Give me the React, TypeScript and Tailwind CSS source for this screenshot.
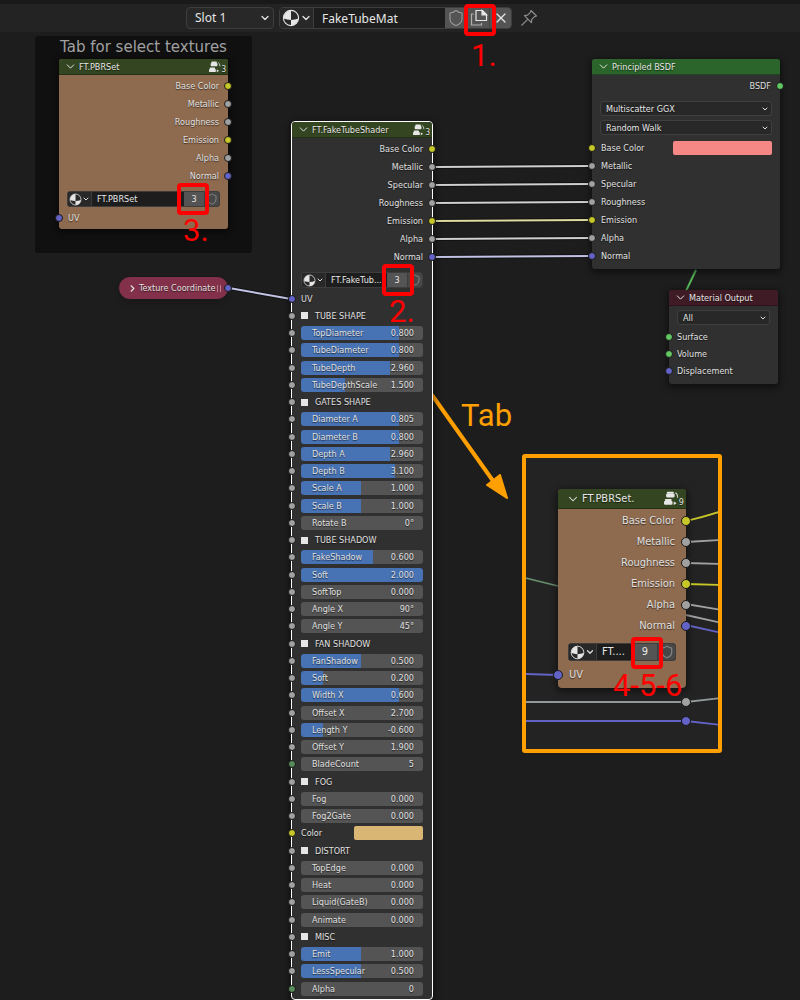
import React, { useId, useState } from "react";
import { ChevronDown, ChevronRight, Shield, X } from "lucide-react";

const small = "font-['DejaVu_Sans_Condensed','DejaVu_Sans',sans-serif] text-[9px] leading-[12px]";
const shadow = "[text-shadow:0_1px_1px_rgba(0,0,0,0.6)]";

type Kind = "color" | "value" | "vector" | "shader" | "int";

const socketColor: Record<Kind, string> = {
  color: "bg-[#c7c729]",
  value: "bg-[#a1a1a1]",
  vector: "bg-[#6363c7]",
  shader: "bg-[#63c763]",
  int: "bg-[#598c5c]",
};

function Socket({ kind, side, large }: { kind: Kind; side: "left" | "right"; large?: boolean }) {
  const size = large ? "size-2.5" : "size-2";
  const place = side === "left" ? (large ? "-left-[5px]" : "-left-1") : large ? "-right-[5px]" : "-right-1";
  return (
    <span className={`absolute top-1/2 -translate-y-1/2 rounded-full border border-[#181818] ${size} ${place} ${socketColor[kind]}`} />
  );
}

function MaterialIcon({ className }: { className: string }) {
  return (
    <svg viewBox="0 0 18 18" className={className} aria-hidden="true">
      <circle cx="9" cy="9" r="7.6" fill="#2a2a2a" stroke="#e6e6e6" strokeWidth="1.1" />
      <path d="M9 1.4A7.6 7.6 0 0 0 1.6 9.6Q5 11 9 11Z" fill="#e6e6e6" />
      <path d="M9 11Q13 11 16.4 9.6A7.6 7.6 0 0 1 9 16.6Z" fill="#e6e6e6" />
    </svg>
  );
}

function GroupIcon({ users, large }: { users: number; large?: boolean }) {
  return (
    <span className={`flex items-end text-[#e2e2e2] ${large ? "text-[9px] leading-[8px]" : "text-[8px] leading-[6px]"}`}>
      <svg viewBox="0 0 13 13" className={large ? "size-[15px]" : "size-[12px]"} aria-hidden="true">
        <g fill="#e6e6e6">
          <rect x="2.5" y="0.6" width="6" height="1.7" rx="0.8" />
          <rect x="1.8" y="2.2" width="7.4" height="3.4" rx="1" />
          <rect x="0.7" y="7" width="6" height="1.7" rx="0.8" />
          <rect x="0" y="8.6" width="7.4" height="3.4" rx="1" />
          <path d="M8.4 9.1l2.6 1.5-2.6 1.5z" />
        </g>
        <path d="M9.8 1.6q2 .4 2 4.2" stroke="#c8c8c8" strokeWidth="1" fill="none" />
      </svg>
      <span>{users}</span>
    </span>
  );
}

function NodeHeader({ title, tone, users, large }: { title: string; tone: string; users?: number; large?: boolean }) {
  return (
    <header
      className={`flex items-center rounded-t-[3px] border-b border-black/30 text-[#e6e6e6] ${shadow} ${tone} ${
        large ? "h-5 gap-0.5 pr-0.5 pl-2" : "h-4 gap-0.5 pr-0.5 pl-[5px]"
      }`}
    >
      <ChevronDown className={large ? "size-3.5" : "size-[13px]"} strokeWidth={1.8} />
      <h2 className="flex-1 truncate">{title}</h2>
      {users !== undefined && <GroupIcon users={users} large={large} />}
    </header>
  );
}

function Outputs({ items, large }: { items: [string, Kind][]; large?: boolean }) {
  return (
    <ul>
      {items.map(([name, kind]) => (
        <li
          key={name}
          className={`relative flex items-center justify-end ${shadow} ${large ? "h-[21px] pr-[11px]" : "h-[18px] pr-[9px]"}`}
        >
          {name}
          <Socket kind={kind} side="right" large={large} />
        </li>
      ))}
    </ul>
  );
}

function DataBlock({ name, users, large }: { name: string; users: number; large?: boolean }) {
  return (
    <div
      className={`flex items-stretch overflow-hidden rounded-[3px] border border-[#3d3d3d] bg-[#1d1d1d] ${large ? "h-[18px]" : "h-4"}`}
    >
      <button
        type="button"
        aria-label="Browse node groups"
        className={`flex items-center justify-center border-r border-[#3d3d3d] bg-[#282828] text-[#ddd] ${large ? "w-7" : "w-6"}`}
      >
        <MaterialIcon className={large ? "size-[15px]" : "size-[13px]"} />
        <ChevronDown className={large ? "size-2.5" : "size-2"} strokeWidth={3} />
      </button>
      <input
        aria-label="Node group name"
        defaultValue={name}
        className="w-0 min-w-0 flex-1 bg-transparent pl-[5px] text-[#e6e6e6] outline-none"
      />
      <button type="button" className={`bg-[#545454] text-[#e6e6e6] ${large ? "w-6" : "w-5"}`}>
        {users}
      </button>
      <button
        type="button"
        aria-label="Fake user"
        className={`flex items-center justify-center border-l border-[#3d3d3d] bg-[#484848] text-[#858585] ${large ? "w-[18px]" : "w-[15px]"}`}
      >
        <Shield className={large ? "size-3.5" : "size-3"} strokeWidth={2} />
      </button>
    </div>
  );
}

function Dropdown({ label, value }: { label: string; value: string }) {
  return (
    <div className="relative flex h-[15px] items-center rounded-[3px] border border-[#3f3f3f] bg-[#282828]">
      <select aria-label={label} className={`h-full w-full appearance-none bg-transparent pl-[5px] text-[#e6e6e6] outline-none ${shadow}`}>
        <option>{value}</option>
      </select>
      <ChevronDown className="pointer-events-none absolute right-0.5 size-2 text-[#ddd]" strokeWidth={3} />
    </div>
  );
}

function Swatch({ label, value, className }: { label: string; value: string; className: string }) {
  const id = useId();
  return (
    <>
      <label htmlFor={id} className={`flex-1 ${shadow}`}>{label}</label>
      <input
        id={id}
        type="color"
        defaultValue={value}
        className={`h-3.5 appearance-none overflow-hidden rounded-[2px] bg-transparent p-0 [&::-webkit-color-swatch]:border-0 [&::-webkit-color-swatch-wrapper]:p-0 ${className}`}
      />
    </>
  );
}

function Field({ label, value, fill }: { label: string; value: string; fill: number }) {
  const id = useId();
  return (
    <div
      className="flex h-3.5 w-full items-center rounded-[3px] bg-[#545454] pr-[9px] pl-[11px]"
      style={{ backgroundImage: `linear-gradient(to right, #4772b3 ${fill}%, transparent ${fill}%)` }}
    >
      <label htmlFor={id} className={`whitespace-nowrap ${shadow}`}>{label}</label>
      <input id={id} defaultValue={value} className={`w-0 min-w-0 flex-1 bg-transparent text-right outline-none ${shadow}`} />
    </div>
  );
}

function Section({ label }: { label: string }) {
  const [on, setOn] = useState(false);
  return (
    <label className={`flex items-center gap-[7px] ${shadow}`}>
      <input
        type="checkbox"
        checked={on}
        onChange={() => setOn(!on)}
        className="size-[7px] appearance-none bg-[#e6e6e6] checked:bg-[#4772b3]"
      />
      {label}
    </label>
  );
}

type Row =
  | { type: "section"; label: string }
  | { type: "field"; label: string; value: string; fill: number; kind?: Kind }
  | { type: "swatch"; label: string; value: string };

const s = (label: string): Row => ({ type: "section", label });
const f = (label: string, value: string, fill = 0, kind: Kind = "value"): Row => ({ type: "field", label, value, fill, kind });

const shaderRows: Row[] = [
  s("TUBE SHAPE"),
  f("TopDiameter", "0.800", 80),
  f("TubeDiameter", "0.800", 80),
  f("TubeDepth", "2.960", 73),
  f("TubeDepthScale", "1.500", 36),
  s("GATES SHAPE"),
  f("Diameter A", "0.805", 80),
  f("Diameter B", "0.800", 80),
  f("Depth A", "2.960", 73),
  f("Depth B", "3.100", 77),
  f("Scale A", "1.000", 49),
  f("Scale B", "1.000", 49),
  f("Rotate B", "0°"),
  s("TUBE SHADOW"),
  f("FakeShadow", "0.600", 59),
  f("Soft", "2.000", 100),
  f("SoftTop", "0.000"),
  f("Angle X", "90°"),
  f("Angle Y", "45°"),
  s("FAN SHADOW"),
  f("FanShadow", "0.500", 49),
  f("Soft", "0.200", 18),
  f("Width X", "0.600", 80),
  f("Offset X", "2.700"),
  f("Length Y", "-0.600", 18),
  f("Offset Y", "1.900"),
  f("BladeCount", "5", 0, "int"),
  s("FOG"),
  f("Fog", "0.000"),
  f("Fog2Gate", "0.000"),
  { type: "swatch", label: "Color", value: "#d9b673" },
  s("DISTORT"),
  f("TopEdge", "0.000"),
  f("Heat", "0.000"),
  f("Liquid(GateB)", "0.000"),
  f("Animate", "0.000"),
  s("MISC"),
  f("Emit", "1.000", 49),
  f("LessSpecular", "0.500", 49),
  f("Alpha", "0", 0, "int"),
];

const pbrOutputs: [string, Kind][] = [
  ["Base Color", "color"],
  ["Metallic", "value"],
  ["Roughness", "value"],
  ["Emission", "color"],
  ["Alpha", "value"],
  ["Normal", "vector"],
];

const bsdfInputs: [string, Kind][] = [
  ["Metallic", "value"],
  ["Specular", "value"],
  ["Roughness", "value"],
  ["Emission", "color"],
  ["Alpha", "value"],
  ["Normal", "vector"],
];

const drop = "shadow-[0_2px_6px_2px_rgba(0,0,0,0.45)]";

function TopBar() {
  return (
    <header className="relative flex h-8 items-center border-t-4 border-[#191919] bg-[#232323] pl-[186px] font-['Noto_Sans',sans-serif] text-[12px] text-[#e6e6e6]">
      <div className="relative flex h-[22px] w-[88px] items-center rounded-[4px] border border-[#3d3d3d] bg-[#282828]">
        <select aria-label="Material slot" className="h-full w-full appearance-none bg-transparent pl-2 outline-none">
          <option>Slot 1</option>
        </select>
        <ChevronDown className="pointer-events-none absolute right-0.5 size-3" strokeWidth={2.5} />
      </div>
      <div className="ml-[5px] flex h-[22px] w-[233px] items-stretch overflow-hidden rounded-[4px] border border-[#3d3d3d] bg-[#1d1d1d]">
        <button type="button" aria-label="Browse materials" className="flex w-[34px] items-center justify-center border-r border-[#3d3d3d] bg-[#282828]">
          <MaterialIcon className="size-[18px]" />
          <ChevronDown className="size-3" strokeWidth={2.5} />
        </button>
        <input aria-label="Material name" defaultValue="FakeTubeMat" className="w-0 flex-1 bg-transparent pl-2 outline-none" />
        <button type="button" aria-label="Fake user" className="flex w-[22px] items-center justify-center bg-[#545454] text-[#999]">
          <Shield className="size-[18px]" strokeWidth={1.5} />
        </button>
        <button type="button" aria-label="New material" className="flex w-[22px] items-center justify-center border-l border-[#444] bg-[#545454]">
          <svg viewBox="0 0 18 18" className="size-[18px]" fill="none" stroke="#e6e6e6" strokeWidth="1.2" aria-hidden="true">
            <path d="M6 1.5h6.5l4 4v6H6z" />
            <path d="M12 1.5v4.5h4.5z" fill="#e6e6e6" />
            <path d="M3.8 5H1.5v11h10v-2" stroke="#b0b0b0" />
          </svg>
        </button>
        <button type="button" aria-label="Unlink material" className="flex w-[22px] items-center justify-center border-l border-[#444] bg-[#545454]">
          <X className="size-4" strokeWidth={1.8} />
        </button>
      </div>
      <button type="button" aria-label="Pin" className="ml-2 text-[#8c8c8c]">
        <svg viewBox="0 0 18 18" className="size-[18px]" fill="none" stroke="currentColor" strokeWidth="1.2" strokeLinejoin="round" aria-hidden="true">
          <path d="M11 1.5L16.5 7L14.6 7.6L11.8 10.4L11.4 13.6L4.4 6.6L7.6 6.2L10.4 3.4Z" />
          <path d="M7.9 10.1L1.5 16.5" />
        </svg>
      </button>
    </header>
  );
}

function PbrNode() {
  return (
    <section className={`absolute top-[59px] left-[59px] w-[169px] rounded-[3px] bg-[#8e6a4e] pb-[3px] ${drop}`}>
      <NodeHeader title="FT.PBRSet" tone="bg-[#344621]" users={3} />
      <div className="pt-0.5">
        <Outputs items={pbrOutputs} />
      </div>
      <div className="px-2 pt-[6px]">
        <DataBlock name="FT.PBRSet" users={3} />
      </div>
      <p className={`relative mt-0.5 flex h-[17px] items-center pl-[9px] ${shadow}`}>
        <Socket kind="vector" side="left" />
        UV
      </p>
    </section>
  );
}

function ShaderNode() {
  return (
    <section className={`absolute top-[121px] left-[291px] flex h-[879px] w-[142px] flex-col rounded-[4px] border border-white bg-[#303030] ${drop}`}>
      <NodeHeader title="FT.FakeTubeShader" tone="bg-[#344621]" users={3} />
      <div className="pt-0.5">
        <Outputs items={[["Base Color", "color"], ["Metallic", "value"], ["Specular", "value"], ...pbrOutputs.slice(2)]} />
      </div>
      <div className="px-[9px] pt-[6px] pb-0.5">
        <DataBlock name="FT.FakeTub..." users={3} />
      </div>
      <ul className="flex flex-1 flex-col pb-0.5">
        <li className={`relative flex flex-1 items-center px-[9px] ${shadow}`}>
          <Socket kind="vector" side="left" />
          UV
        </li>
        {shaderRows.map((row, i) => (
          <li key={i} className="relative flex min-h-0 flex-1 items-center px-[9px]">
            <Socket kind={row.type === "swatch" ? "color" : row.type === "field" ? row.kind ?? "value" : "value"} side="left" />
            {row.type === "section" && <Section label={row.label} />}
            {row.type === "field" && <Field label={row.label} value={row.value} fill={row.fill} />}
            {row.type === "swatch" && <Swatch label={row.label} value={row.value} className="w-[69px]" />}
          </li>
        ))}
      </ul>
    </section>
  );
}

function PrincipledNode() {
  return (
    <section className={`absolute top-[59px] left-[592px] w-[188px] rounded-[3px] bg-[#303030] pb-1 ${drop}`}>
      <NodeHeader title="Principled BSDF" tone="bg-[#2b652b]" />
      <div className="pt-0.5">
        <Outputs items={[["BSDF", "shader"]]} />
      </div>
      <div className="flex flex-col gap-1 px-2 pt-[6px] pb-1">
        <Dropdown label="Distribution" value="Multiscatter GGX" />
        <Dropdown label="Subsurface method" value="Random Walk" />
      </div>
      <div className="relative flex h-[18px] items-center pr-2 pl-[9px]">
        <Socket kind="color" side="left" />
        <Swatch label="Base Color" value="#f58885" className="w-[99px]" />
      </div>
      <ul>
        {bsdfInputs.map(([name, kind]) => (
          <li key={name} className={`relative flex h-[18px] items-center pl-[9px] ${shadow}`}>
            <Socket kind={kind} side="left" />
            {name}
          </li>
        ))}
      </ul>
    </section>
  );
}

function OutputNode() {
  return (
    <section className={`absolute top-[290px] left-[669px] w-[109px] rounded-[3px] bg-[#303030] pb-[5px] ${drop}`}>
      <NodeHeader title="Material Output" tone="bg-[#3f1c25]" />
      <div className="px-2 pt-1 pb-[3px]">
        <Dropdown label="Target" value="All" />
      </div>
      <ul>
        {([["Surface", "shader"], ["Volume", "shader"], ["Displacement", "vector"]] as [string, Kind][]).map(([name, kind]) => (
          <li key={name} className={`relative flex h-[17px] items-center pl-2 ${shadow}`}>
            <Socket kind={kind} side="left" />
            {name}
          </li>
        ))}
      </ul>
    </section>
  );
}

function DetailInset() {
  return (
    <section className="absolute top-[454px] left-[522px] h-[299px] w-[200px] overflow-hidden rounded-[3px] border-4 border-[#ff9f00] bg-[#232323]">
      <svg className="absolute inset-0 size-full" fill="none" strokeWidth="1.8" aria-hidden="true">
        <path d="M0 120L32 128" stroke="#668a6c" />
        <path d="M160 63Q174 60 196 53" stroke="#c7c729" />
        <path d="M160 84L196 82M160 105L196 106M160 146L196 152M160 157L196 165" stroke="#a1a1a1" />
        <path d="M160 126L196 127" stroke="#c7c729" />
        <path d="M160 167L196 175" stroke="#6363c7" />
        <path d="M0 216L32 217M0 263H160L196 267" stroke="#6363c7" />
        <path d="M0 244H160L196 240" stroke="#92979a" />
        <circle cx="160" cy="244" r="4.5" fill="#a1a1a1" stroke="#181818" strokeWidth="1" />
        <circle cx="160" cy="263" r="4.5" fill="#6363c7" stroke="#181818" strokeWidth="1" />
      </svg>
      <div className={`absolute top-[31px] left-[32px] w-[128px] rounded-[4px] bg-[#8e6a4e] pb-1 text-[11px] ${drop}`}>
        <NodeHeader title="FT.PBRSet." tone="bg-[#344621]" users={9} large />
        <div className="pt-px">
          <Outputs items={pbrOutputs} large />
        </div>
        <div className="px-2.5 pt-[7px]">
          <DataBlock name="FT...." users={9} large />
        </div>
        <p className={`relative mt-1 flex h-[19px] items-center pl-[11px] ${shadow}`}>
          <Socket kind="vector" side="left" large />
          UV
        </p>
      </div>
    </section>
  );
}

function Wires() {
  return (
    <svg className="absolute inset-0 size-full" fill="none" aria-hidden="true">
      <g stroke="#111" strokeWidth="4">
        <path d="M433 167L592 166M433 185L592 184M433 203L592 202M433 221L592 220M433 239L592 238M433 257L592 256M229 288L291 299" />
      </g>
      <g strokeWidth="2">
        <path d="M433 167L592 166M433 185L592 184M433 203L592 202M433 239L592 238" stroke="#d0d0d0" />
        <path d="M433 221L592 220" stroke="#dedca0" />
        <path d="M433 257L592 256M229 288L291 299" stroke="#c3c3e6" />
        <path d="M696 270L686 291" stroke="#55b45a" />
      </g>
      <path d="M432 395L496 485" stroke="#ff9f00" strokeWidth="4" />
      <path d="M507 498L500 475L487 485Z" fill="#ff9f00" stroke="#ff9f00" strokeWidth="2" strokeLinejoin="round" />
    </svg>
  );
}

function Marker({ className }: { className: string }) {
  return <span className={`pointer-events-none absolute rounded-[4px] border-4 border-[#ff0000] ${className}`} />;
}

function Callout({ className, children }: { className: string; children: React.ReactNode }) {
  return (
    <p className={`pointer-events-none absolute font-[Roboto,sans-serif] text-[31px] leading-8 whitespace-nowrap ${className}`}>
      {children}
    </p>
  );
}

export default function App() {
  return (
    <div className={`relative min-h-[1000px] overflow-hidden bg-[#1d1d1d] text-[#e0e0e0] ${small}`}>
      <TopBar />
      <main>
        <div className="absolute top-9 left-[35px] h-[217px] w-[217px] rounded-[3px] bg-[#101010]">
          <h1 className="pt-0.5 text-center font-['DejaVu_Sans',sans-serif] text-[15px] leading-[18px] text-[#a0a0a0]">
            Tab for select textures
          </h1>
        </div>
        <Wires />
        <PbrNode />
        <div className="absolute top-[276px] left-[118px] flex h-6 w-[111px] items-center gap-px rounded-full border border-[#191919] bg-[#83314a] pl-2 shadow-md">
          <ChevronRight className="size-[11px] shrink-0" strokeWidth={2.5} />
          <span className={`whitespace-nowrap ${shadow}`}>Texture Coordinate</span>
          <span className="ml-px h-[7px] w-1 shrink-0 border-x border-white/40" />
          <Socket kind="vector" side="right" />
        </div>
        <ShaderNode />
        <PrincipledNode />
        <OutputNode />
        <DetailInset />
      </main>
      <Marker className="top-1 left-[464px] h-8 w-8" />
      <Marker className="top-[183px] left-[177px] h-8 w-8" />
      <Marker className="top-[264px] left-[382px] h-8 w-8" />
      <Marker className="top-[637px] left-[631px] h-8 w-8" />
      <Callout className="top-[40px] left-[471px] text-[#ff0000]">1.</Callout>
      <Callout className="top-[215px] left-[183px] text-[#ff0000]">3.</Callout>
      <Callout className="top-[296px] left-[389px] text-[#ff0000]">2.</Callout>
      <Callout className="top-[670px] left-[613px] text-[#ff0000]">4-5-6</Callout>
      <Callout className="top-[400px] left-[461px] text-[#ff9f00]">Tab</Callout>
    </div>
  );
}
